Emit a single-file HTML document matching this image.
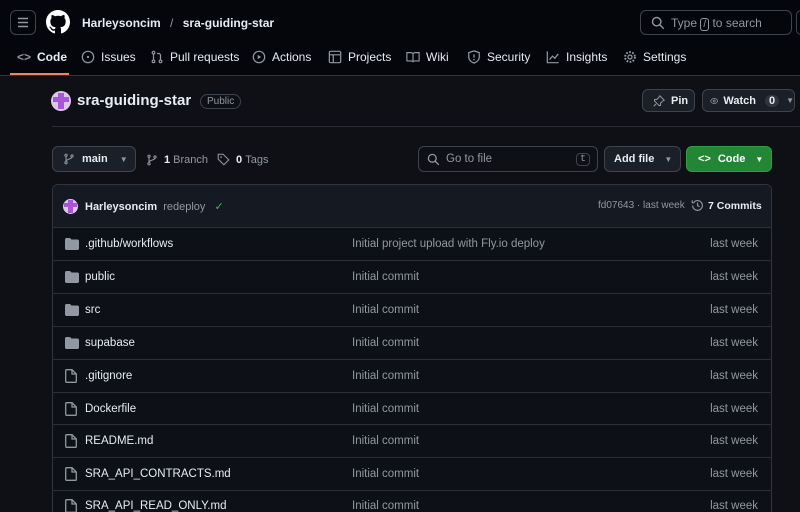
<!DOCTYPE html>
<html style="width:800px;height:512px;overflow:hidden"><head><meta charset="utf-8"><style>
*{box-sizing:border-box;margin:0;padding:0}
body{width:800px;height:512px;overflow:hidden;background:#0f1016;font-family:"Liberation Sans",sans-serif;color:#e6edf3;font-size:12px;position:relative}
.a{position:absolute}
.hdr{left:0;top:0;width:800px;height:76px;background:#05060b;border-bottom:1px solid #30363d}
.btn{position:absolute;border:1px solid #3d444d;border-radius:6px;background:#1b1f27;display:flex;align-items:center;font-weight:bold;font-size:11px;color:#e6edf3}
.nav{top:50px;font-size:12px;display:flex;align-items:center;gap:6px;color:#e6edf3}
svg{display:block}
.row{position:absolute;left:52px;width:720px;height:33px;border-top:1px solid #2a2f38;display:flex;align-items:center;font-size:11.5px}
.row .n{position:absolute;left:33px;color:#e6edf3}
.row .m{position:absolute;left:300px;color:#9198a1}
.row .t{position:absolute;right:14px;color:#9198a1}
.row svg{position:absolute;left:13px}
</style></head><body>
<div class="a hdr"></div>
<div class="a" style="left:10px;top:10px;width:26px;height:25px;border:1px solid #3d444d;border-radius:6px"><svg width="24" height="23" viewBox="0 0 24 23"><path d="M7 7.5h10M7 11.5h10M7 15.5h10" stroke="#9198a1" stroke-width="1.5"/></svg></div>
<svg class="a" style="left:46px;top:10px" width="24" height="24" viewBox="0 0 16 16"><path fill="#fff" d="M8 0C3.58 0 0 3.58 0 8c0 3.540 2.29 6.53 5.47 7.59.4.07.55-.17.55-.38 0-.19-.01-.82-.01-1.49-2.01.37-2.530-.49-2.69-.94-.09-.23-.48-.94-.82-1.13-.28-.15-.68-.52-.01-.53.63-.01 1.08.58 1.23.82.72 1.21 1.87.87 2.33.66.07-.52.28-.87.51-1.07-1.78-.2-3.64-.89-3.64-3.95 0-.87.31-1.59.82-2.15-.08-.2-.36-1.02.08-2.12 0 0 .67-.21 2.2.82.64-.18 1.32-.27 2-.27.68 0 1.36.09 2 .27 1.53-1.04 2.2-.82 2.2-.82.44 1.1.16 1.92.08 2.12.51.56.82 1.27.82 2.15 0 3.07-1.87 3.75-3.65 3.95.29.25.54.73.54 1.48 0 1.07-.01 1.93-.01 2.2 0 .21.15.46.55.38A8.013 8.013 0 0016 8c0-4.42-3.58-8-8-8z"/></svg>
<div class="a" style="left:82px;top:16px;font-size:12px;font-weight:bold">Harleysoncim <span style="color:#9198a1;font-weight:normal;margin:0 6px">/</span> sra-guiding-star</div>
<div class="a" style="left:640px;top:10px;width:152px;height:25px;border:1px solid #3d444d;border-radius:6px;font-size:12px;color:#9198a1;display:flex;align-items:center;padding-left:10px">
<svg width="14" height="14" viewBox="0 0 16 16"><circle cx="6.5" cy="6.5" r="4.8" stroke="#9198a1" stroke-width="1.6" fill="none"/><path d="M10 10l4.5 4.5" stroke="#9198a1" stroke-width="1.6"/></svg>
<span style="margin-left:6px">Type <span style="border:1px solid #9198a1;border-radius:3px;padding:0 2px;font-size:10px">/</span> to search</span></div>
<div class="a" style="left:796px;top:10px;width:10px;height:25px;border:1px solid #3d444d;border-radius:6px"></div>

<div class="a nav" style="left:17px;font-weight:bold"><span style="color:#9198a1">&lt;&gt;</span>Code</div>
<div class="a" style="left:10px;top:73px;width:59px;height:2px;background:#f78166"></div>
<div class="a nav" style="left:81px"><svg width="14" height="14" viewBox="0 0 16 16"><circle cx="8" cy="8" r="6.5" stroke="#9198a1" stroke-width="1.4" fill="none"/><circle cx="8" cy="8" r="1.3" fill="#9198a1"/></svg>Issues</div>
<div class="a nav" style="left:150px"><svg width="14" height="14" viewBox="0 0 16 16"><g stroke="#9198a1" stroke-width="1.4" fill="none"><circle cx="4" cy="3" r="1.5"/><circle cx="4" cy="13" r="1.5"/><circle cx="12" cy="13" r="1.5"/><path d="M4 4.5v7M12 11.5V6c0-1-1-2-2-2H8"/></g></svg>Pull requests</div>
<div class="a nav" style="left:252px"><svg width="14" height="14" viewBox="0 0 16 16"><circle cx="8" cy="8" r="6.5" stroke="#9198a1" stroke-width="1.4" fill="none"/><path d="M6.5 5.5v5l4-2.5z" fill="#9198a1"/></svg>Actions</div>
<div class="a nav" style="left:328px"><svg width="14" height="14" viewBox="0 0 16 16"><rect x="1.5" y="1.5" width="13" height="13" rx="1.5" stroke="#9198a1" stroke-width="1.4" fill="none"/><path d="M1.5 5.5h13M6 5.5v9" stroke="#9198a1" stroke-width="1.4"/></svg>Projects</div>
<div class="a nav" style="left:406px"><svg width="14" height="14" viewBox="0 0 16 16"><path d="M1 3h4.5c1.2 0 2.5.8 2.5 2v9c0-1-1-1.5-2-1.5H1zM15 3h-4.5C9.3 3 8 3.8 8 5v9c0-1 1-1.5 2-1.5h5z" stroke="#9198a1" stroke-width="1.3" fill="none"/></svg>Wiki</div>
<div class="a nav" style="left:467px"><svg width="14" height="14" viewBox="0 0 16 16"><path d="M8 1l6 2v5c0 3.5-3 6-6 7-3-1-6-3.5-6-7V3z" stroke="#9198a1" stroke-width="1.4" fill="none"/><path d="M8 5v3.5" stroke="#9198a1" stroke-width="1.5"/><circle cx="8" cy="11" r=".9" fill="#9198a1"/></svg>Security</div>
<div class="a nav" style="left:546px"><svg width="14" height="14" viewBox="0 0 16 16"><path d="M1.5 1.5v13h13M4 11l3.5-4 2.5 2.5 4-5" stroke="#9198a1" stroke-width="1.4" fill="none"/></svg>Insights</div>
<div class="a nav" style="left:623px"><svg width="14" height="14" viewBox="0 0 16 16"><circle cx="8" cy="8" r="2.3" stroke="#9198a1" stroke-width="1.4" fill="none"/><circle cx="8" cy="8" r="5.6" stroke="#9198a1" stroke-width="2.2" stroke-dasharray="2 1.6" fill="none"/></svg>Settings</div>

<div class="a" style="left:51px;top:91px;width:20px;height:20px;border-radius:50%;background:#dcc8ee;overflow:hidden"><div class="a" style="left:7px;top:2px;width:6px;height:16px;background:#a855d8"></div><div class="a" style="left:2px;top:6px;width:16px;height:5px;background:#a855d8"></div></div>
<div class="a" style="left:77px;top:92px;font-size:15px;font-weight:bold">sra-guiding-star</div>
<div class="a" style="left:200px;top:94px;border:1px solid #3d444d;border-radius:10px;font-size:10px;color:#9198a1;padding:1px 6px">Public</div>
<div class="btn" style="left:642px;top:89px;width:53px;height:23px;padding-left:10px"><svg width="12" height="12" viewBox="0 0 16 16"><path d="M9 1l6 6-2 1-3 3 0 3-2 0-6-6 0-2 3 0 3-3z M4 12l-3 3" stroke="#9198a1" stroke-width="1.3" fill="none"/></svg><span style="margin-left:6px">Pin</span></div>
<div class="btn" style="left:702px;top:89px;width:93px;height:23px;padding-left:7px"><svg width="15" height="12" viewBox="0 0 16 12"><path d="M1 6c2-3.5 4.5-5 7-5s5 1.5 7 5c-2 3.5-4.5 5-7 5S3 9.5 1 6z" stroke="#9198a1" stroke-width="1.4" fill="none"/><circle cx="8" cy="6" r="2" stroke="#9198a1" stroke-width="1.4" fill="none"/></svg><span style="margin-left:5px">Watch</span><span style="margin-left:9px;background:#2f353d;border-radius:8px;padding:0 4px">0</span><span style="margin-left:7px;color:#9198a1;font-size:8px">▼</span></div>
<div class="a" style="left:52px;top:126px;width:748px;height:1px;background:#2a2f38"></div>

<div class="btn" style="left:52px;top:146px;width:84px;height:26px;padding-left:10px"><svg width="12" height="12" viewBox="0 0 16 16"><g stroke="#9198a1" stroke-width="1.4" fill="none"><circle cx="4" cy="3" r="1.5"/><circle cx="4" cy="13" r="1.5"/><circle cx="12" cy="4" r="1.5"/><path d="M4 4.5v7M12 5.5c0 3-8 2-8 6"/></g></svg><span style="margin-left:7px">main</span><span style="margin-left:12px;color:#9198a1;font-size:8px">▼</span></div>
<div class="a" style="left:146px;top:153px;display:flex;align-items:center;font-size:11px;color:#9198a1"><svg width="12" height="12" viewBox="0 0 16 16"><g stroke="#9198a1" stroke-width="1.4" fill="none"><circle cx="4" cy="3" r="1.5"/><circle cx="4" cy="13" r="1.5"/><circle cx="12" cy="4" r="1.5"/><path d="M4 4.5v7M12 5.5c0 3-8 2-8 6"/></g></svg><b style="color:#e6edf3;margin-left:6px">1</b>&nbsp;Branch<svg style="margin-left:9px" width="13" height="13" viewBox="0 0 16 16"><path d="M1.5 1.5h6l7 7-6 6-7-7z" stroke="#9198a1" stroke-width="1.3" fill="none"/><circle cx="5" cy="5" r="1" fill="#9198a1"/></svg><b style="color:#e6edf3;margin-left:6px">0</b>&nbsp;Tags</div>
<div class="a" style="left:418px;top:146px;width:180px;height:26px;border:1px solid #3d444d;border-radius:6px;display:flex;align-items:center;padding-left:8px;font-size:11.5px;color:#9198a1"><svg width="13" height="13" viewBox="0 0 16 16"><circle cx="6.5" cy="6.5" r="4.8" stroke="#9198a1" stroke-width="1.6" fill="none"/><path d="M10 10l4.5 4.5" stroke="#9198a1" stroke-width="1.6"/></svg><span style="margin-left:6px">Go to file</span><span style="position:absolute;right:7px;border:1px solid #3d444d;border-radius:4px;font-size:10px;padding:0 3px;font-family:'Liberation Mono',monospace">t</span></div>
<div class="btn" style="left:604px;top:146px;width:77px;height:26px;padding-left:9px">Add file<span style="margin-left:10px;color:#9198a1;font-size:8px">▼</span></div>
<div class="btn" style="left:686px;top:146px;width:86px;height:26px;padding-left:11px;background:#238636;border-color:#2ea043;color:#fff">&lt;&gt;<span style="margin-left:7px">Code</span><span style="margin-left:10px;font-size:8px">▼</span></div>

<div class="a" style="left:52px;top:184px;width:720px;height:340px;border:1px solid #2f353d;border-radius:6px;background:#0e1017"></div>
<div class="a" style="left:53px;top:185px;width:718px;height:42px;background:#151922;border-radius:6px 6px 0 0"></div>
<div class="a" style="left:63px;top:199px;width:15px;height:15px;border-radius:50%;background:#dcc8ee;overflow:hidden"><div class="a" style="left:5px;top:1px;width:5px;height:13px;background:#a855d8"></div><div class="a" style="left:1px;top:4px;width:13px;height:4px;background:#a855d8"></div></div>
<div class="a" style="left:85px;top:200px;font-size:11px"><b>Harleysoncim</b> <span style="color:#9198a1;margin-left:3px">redeploy</span> <span style="color:#3fb950;margin-left:6px">✓</span></div>
<div class="a" style="left:598px;top:200px;font-size:10px;color:#9198a1">fd07643 · last week</div>
<div class="a" style="left:691px;top:199px;display:flex;align-items:center;font-size:10.5px;font-weight:bold"><svg width="13" height="13" viewBox="0 0 16 16"><path d="M2 8a6 6 0 1 0 1.8-4.3M1.5 1.5v3h3M8 4.5V8l2.5 1.5" stroke="#9198a1" stroke-width="1.4" fill="none"/></svg><span style="margin-left:4px">7 Commits</span></div>

<div class="row" style="top:227px"><svg width="14" height="12" viewBox="0 0 14 12"><path d="M0 1.5C0 .7.7 0 1.5 0h3.5l1.5 1.5h6c.8 0 1.5.7 1.5 1.5v7.5c0 .8-.7 1.5-1.5 1.5h-11C.7 12 0 11.3 0 10.5z" fill="#9198a1"/></svg><span class="n">.github/workflows</span><span class="m">Initial project upload with Fly.io deploy</span><span class="t">last week</span></div>
<div class="row" style="top:260px"><svg width="14" height="12" viewBox="0 0 14 12"><path d="M0 1.5C0 .7.7 0 1.5 0h3.5l1.5 1.5h6c.8 0 1.5.7 1.5 1.5v7.5c0 .8-.7 1.5-1.5 1.5h-11C.7 12 0 11.3 0 10.5z" fill="#9198a1"/></svg><span class="n">public</span><span class="m">Initial commit</span><span class="t">last week</span></div>
<div class="row" style="top:293px"><svg width="14" height="12" viewBox="0 0 14 12"><path d="M0 1.5C0 .7.7 0 1.5 0h3.5l1.5 1.5h6c.8 0 1.5.7 1.5 1.5v7.5c0 .8-.7 1.5-1.5 1.5h-11C.7 12 0 11.3 0 10.5z" fill="#9198a1"/></svg><span class="n">src</span><span class="m">Initial commit</span><span class="t">last week</span></div>
<div class="row" style="top:326px"><svg width="14" height="12" viewBox="0 0 14 12"><path d="M0 1.5C0 .7.7 0 1.5 0h3.5l1.5 1.5h6c.8 0 1.5.7 1.5 1.5v7.5c0 .8-.7 1.5-1.5 1.5h-11C.7 12 0 11.3 0 10.5z" fill="#9198a1"/></svg><span class="n">supabase</span><span class="m">Initial commit</span><span class="t">last week</span></div>
<div class="row" style="top:359px"><svg width="12" height="14" viewBox="0 0 12 14"><path d="M1.5.7h5.5l4.3 4.3v7.5c0 .4-.4.8-.8.8H1.5c-.4 0-.8-.4-.8-.8V1.5c0-.4.4-.8.8-.8zM7 .7V5h4.3" stroke="#9198a1" stroke-width="1.3" fill="none"/></svg><span class="n">.gitignore</span><span class="m">Initial commit</span><span class="t">last week</span></div>
<div class="row" style="top:392px"><svg width="12" height="14" viewBox="0 0 12 14"><path d="M1.5.7h5.5l4.3 4.3v7.5c0 .4-.4.8-.8.8H1.5c-.4 0-.8-.4-.8-.8V1.5c0-.4.4-.8.8-.8zM7 .7V5h4.3" stroke="#9198a1" stroke-width="1.3" fill="none"/></svg><span class="n">Dockerfile</span><span class="m">Initial commit</span><span class="t">last week</span></div>
<div class="row" style="top:424px"><svg width="12" height="14" viewBox="0 0 12 14"><path d="M1.5.7h5.5l4.3 4.3v7.5c0 .4-.4.8-.8.8H1.5c-.4 0-.8-.4-.8-.8V1.5c0-.4.4-.8.8-.8zM7 .7V5h4.3" stroke="#9198a1" stroke-width="1.3" fill="none"/></svg><span class="n">README.md</span><span class="m">Initial commit</span><span class="t">last week</span></div>
<div class="row" style="top:457px"><svg width="12" height="14" viewBox="0 0 12 14"><path d="M1.5.7h5.5l4.3 4.3v7.5c0 .4-.4.8-.8.8H1.5c-.4 0-.8-.4-.8-.8V1.5c0-.4.4-.8.8-.8zM7 .7V5h4.3" stroke="#9198a1" stroke-width="1.3" fill="none"/></svg><span class="n">SRA_API_CONTRACTS.md</span><span class="m">Initial commit</span><span class="t">last week</span></div>
<div class="row" style="top:490px;height:22px;overflow:hidden;align-items:flex-start;padding-top:8px"><svg width="12" height="14" viewBox="0 0 12 14" style="top:8px"><path d="M1.5.7h5.5l4.3 4.3v7.5c0 .4-.4.8-.8.8H1.5c-.4 0-.8-.4-.8-.8V1.5c0-.4.4-.8.8-.8zM7 .7V5h4.3" stroke="#9198a1" stroke-width="1.3" fill="none"/></svg><span class="n" style="top:9px">SRA_API_READ_ONLY.md</span><span class="m" style="top:9px">Initial commit</span><span class="t" style="top:9px">last week</span></div>
</body></html>
